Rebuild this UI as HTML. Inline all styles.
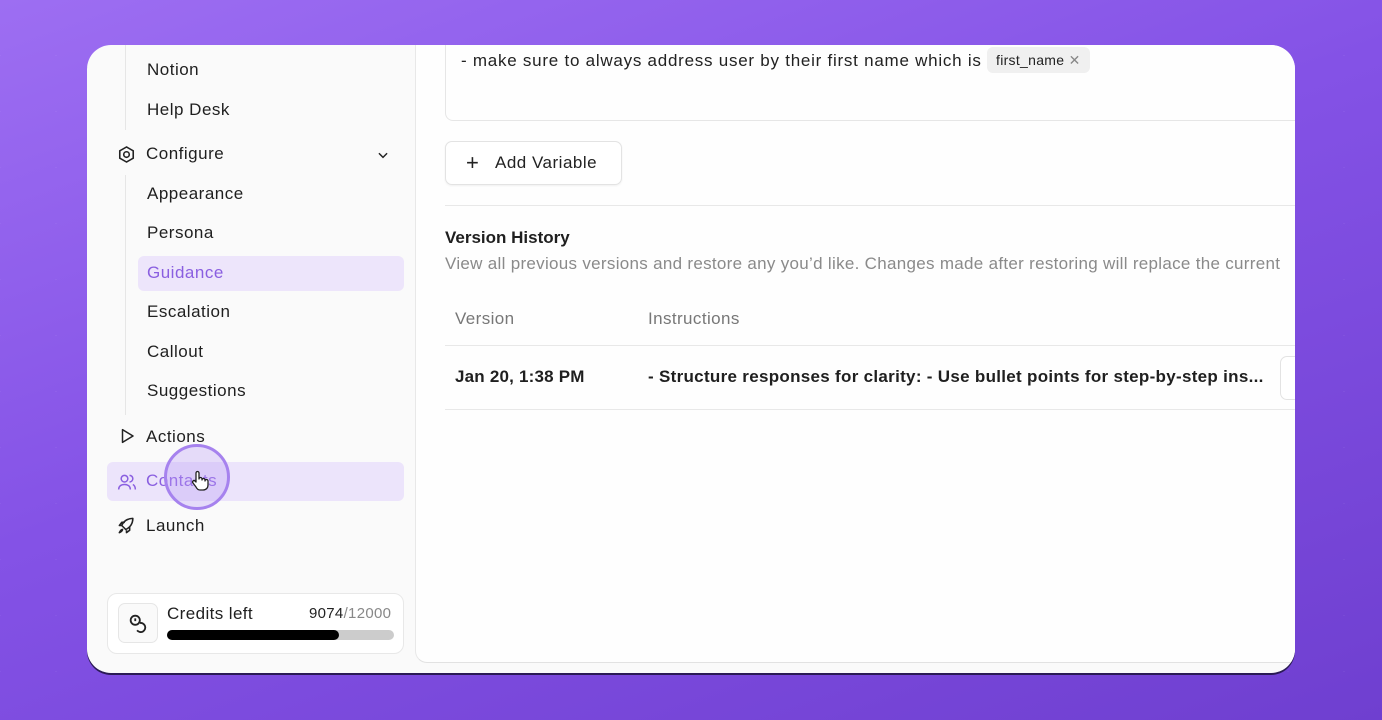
<!DOCTYPE html>
<html><head><meta charset="utf-8"><style>
*{margin:0;padding:0;box-sizing:border-box}
body{width:1382px;height:720px;overflow:hidden;font-family:"Liberation Sans",sans-serif;background:linear-gradient(160deg,#9d6ef2 0%,#8452e6 45%,#6f3fd0 100%);position:relative}
.pat{position:absolute;inset:0;background-image:linear-gradient(45deg,rgba(255,255,255,.06) 1px,transparent 1px),linear-gradient(-45deg,rgba(255,255,255,.06) 1px,transparent 1px);background-size:56px 56px;}
.card{position:absolute;left:87px;top:45px;width:1208px;height:628px;background:#fafafa;border-radius:24px;overflow:hidden;box-shadow:0 2px 0 #2a1a55}
.a{position:absolute;white-space:nowrap}
.nav{font-size:17px;color:#1f1f1f;letter-spacing:.5px}
.main{position:absolute;left:328px;top:-20px;width:900px;height:638px;background:#fefefe;border-left:1px solid #e8e8e8;border-bottom:1px solid #e2e2e2;border-bottom-left-radius:12px}
</style></head><body>
<div class="pat"></div>
<div class="card">
  <div class="a" style="left:38px;top:0;width:1px;height:85px;background:#e6e6e6"></div>
  <div class="a" style="left:38px;top:130px;width:1px;height:240px;background:#e6e6e6"></div>
  <div class="a nav" style="left:60px;top:15px">Notion</div>
  <div class="a nav" style="left:60px;top:55px">Help Desk</div>
  <svg class="a" style="left:30px;top:100px" width="19" height="19" viewBox="0 0 24 24" fill="none" stroke="#222" stroke-width="2"><path d="M12 2.5l8.5 4.8v9.4L12 21.5l-8.5-4.8V7.3z"/><circle cx="12" cy="12" r="3.5"/></svg>
  <div class="a nav" style="left:59px;top:99px">Configure</div>
  <svg class="a" style="left:289px;top:103px" width="14" height="14" viewBox="0 0 24 24" fill="none" stroke="#222" stroke-width="2.5"><path d="M5 9l7 7 7-7"/></svg>
  <div class="a nav" style="left:60px;top:139px">Appearance</div>
  <div class="a nav" style="left:60px;top:178px">Persona</div>
  <div class="a" style="left:51px;top:211px;width:266px;height:35px;background:#ede5fb;border-radius:6px"></div>
  <div class="a nav" style="left:60px;top:218px;color:#8a5fe0">Guidance</div>
  <div class="a nav" style="left:60px;top:257px">Escalation</div>
  <div class="a nav" style="left:60px;top:297px">Callout</div>
  <div class="a nav" style="left:60px;top:336px">Suggestions</div>
  <svg class="a" style="left:31px;top:382px" width="18" height="18" viewBox="0 0 24 24" fill="none" stroke="#222" stroke-width="2" stroke-linejoin="round"><path d="M6 3.5l14 8.5-14 8.5z"/></svg>
  <div class="a nav" style="left:59px;top:382px">Actions</div>
  <div class="a" style="left:20px;top:417px;width:297px;height:39px;background:#ece4fb;border-radius:6px"></div>
  <svg class="a" style="left:30px;top:427px" width="20" height="20" viewBox="0 0 24 24" fill="none" stroke="#8a5fe0" stroke-width="1.8"><circle cx="9" cy="8" r="4"/><path d="M2 21c0-4 3-6 7-6s7 2 7 6M15 4a4 4 0 010 8M19 15c2 1 3 3 3 6"/></svg>
  <div class="a nav" style="left:59px;top:426px;color:#8a5fe0">Contacts</div>
  <div class="a" style="left:77px;top:399px;width:66px;height:66px;border-radius:50%;border:3px solid #a682ee;background:rgba(190,160,245,.35)"></div>
  <svg class="a" style="left:104px;top:425px" width="18" height="22" viewBox="0 0 18 22" fill="#fff" stroke="#222" stroke-width="1.3" stroke-linejoin="round"><path d="M5 12V3a1.5 1.5 0 013 0v6a1.5 1.5 0 013 0v1a1.5 1.5 0 013 0v1a1.5 1.5 0 013 0v4c0 3-2 5-5 5H9c-2 0-3-1-4-3l-3-4a1.4 1.4 0 012-2z"/></svg>
  <svg class="a" style="left:30px;top:471px" width="19" height="19" viewBox="0 0 24 24" fill="none" stroke="#222" stroke-width="2" stroke-linejoin="round"><path d="M9 15l-3-3c2-5 7-9 14-9-0 7-4 12-9 14zM6 12H3l3-4h4M12 18v3l4-3v-4M7 17c-2 0-3 2-4 4 2-1 4-2 4-4z"/></svg>
  <div class="a nav" style="left:59px;top:471px">Launch</div>
  <div class="a" style="left:20px;top:548px;width:297px;height:61px;background:#fff;border:1px solid #e8e8e8;border-radius:10px"></div>
  <div class="a" style="left:31px;top:558px;width:40px;height:40px;border:1px solid #e6e6e6;border-radius:7px;background:#fafafa"></div>
  <svg class="a" style="left:40px;top:567px" width="22" height="22" viewBox="0 0 24 24" fill="none" stroke="#222" stroke-width="2"><circle cx="9" cy="9" r="5"/><path d="M9 7v3M14 12a5 5 0 11-3 8"/></svg>
  <div class="a" style="left:80px;top:559px;font-size:17px;color:#1f1f1f;letter-spacing:.4px">Credits left</div>
  <div class="a" style="left:222px;top:560px;font-size:15px;color:#222;letter-spacing:.3px">9074<span style="color:#888">/12000</span></div>
  <div class="a" style="left:80px;top:585px;width:227px;height:10px;background:#ccc;border-radius:5px"></div>
  <div class="a" style="left:80px;top:585px;width:172px;height:10px;background:#000;border-radius:5px"></div>

  <div class="main">
    <div class="a" style="left:29px;top:0;width:900px;height:96px;border:1px solid #e6e6e6;border-top:none;border-radius:0 0 8px 8px"></div>
    <div class="a" style="left:45px;top:26px;font-size:17px;color:#222;letter-spacing:.75px">- make sure to always address user by their first name which is</div>
    <div class="a" style="left:571px;top:22px;height:26px;padding:0 9px;background:#f0f0f0;border-radius:6px;font-size:14px;line-height:26px;color:#222;letter-spacing:.3px">first_name <span style="color:#888">✕</span></div>
    <div class="a" style="left:29px;top:116px;width:177px;height:44px;border:1px solid #e3e3e3;border-radius:7px;background:#fff;box-shadow:0 1px 2px rgba(0,0,0,.06)"></div>
    <div class="a" style="left:50px;top:125px;font-size:22px;color:#222;font-weight:300">+</div>
    <div class="a" style="left:79px;top:128px;font-size:17px;color:#222;letter-spacing:.5px">Add Variable</div>
    <div class="a" style="left:29px;top:180px;width:900px;height:1px;background:#e8e8e8"></div>
    <div class="a" style="left:29px;top:203px;font-size:17px;font-weight:bold;color:#1f1f1f">Version History</div>
    <div class="a" style="left:29px;top:229px;font-size:17px;color:#8a8a8a;letter-spacing:.3px">View all previous versions and restore any you’d like. Changes made after restoring will replace the current</div>
    <div class="a" style="left:39px;top:284px;font-size:17px;color:#777;letter-spacing:.4px">Version</div>
    <div class="a" style="left:232px;top:284px;font-size:17px;color:#777;letter-spacing:.4px">Instructions</div>
    <div class="a" style="left:29px;top:320px;width:900px;height:1px;background:#e8e8e8"></div>
    <div class="a" style="left:39px;top:342px;font-size:17px;color:#1f1f1f;font-weight:bold;letter-spacing:.2px">Jan 20, 1:38 PM</div>
    <div class="a" style="left:232px;top:342px;font-size:17px;color:#1f1f1f;font-weight:bold;letter-spacing:.3px">- Structure responses for clarity: - Use bullet points for step-by-step ins...</div>
    <div class="a" style="left:864px;top:331px;width:40px;height:44px;border:1px solid #e3e3e3;border-radius:7px;background:#fff"></div>
    <div class="a" style="left:29px;top:384px;width:900px;height:1px;background:#e8e8e8"></div>
  </div>
</div>
</body></html>
